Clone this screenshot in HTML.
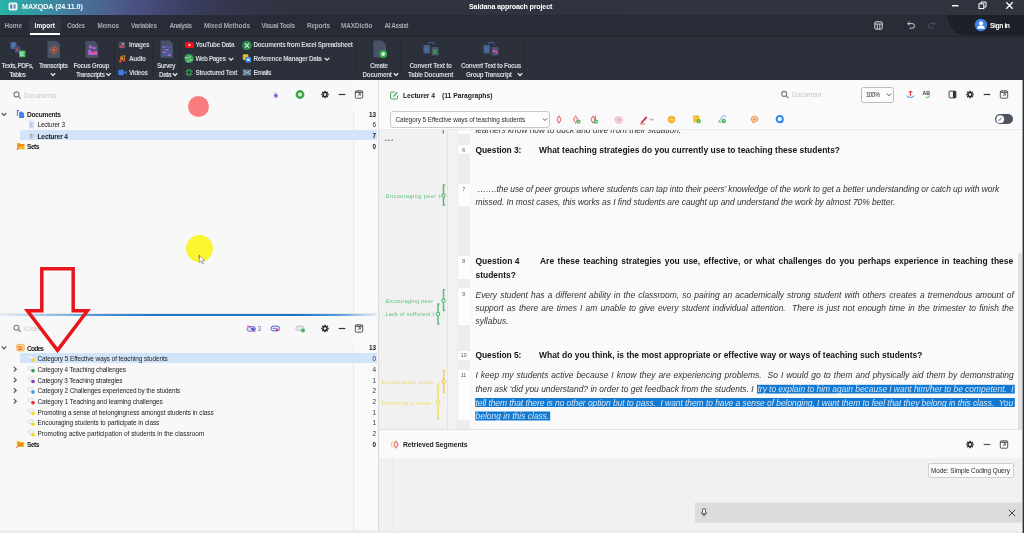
<!DOCTYPE html>
<html lang="en"><head><meta charset="utf-8"><title>MAXQDA</title>
<style>
html,body{margin:0;padding:0}
body{will-change:transform;width:1024px;height:533px;overflow:hidden;position:relative;background:#f8f8f8;font-family:"Liberation Sans",sans-serif;-webkit-font-smoothing:antialiased}
.b{position:absolute;display:block}
.t{position:absolute;white-space:nowrap;display:block}
</style></head>
<body>
<div class="b" style="left:0px;top:80px;width:1024px;height:453px;background:#f9f9f9;"></div>
<div class="b" style="left:0px;top:80px;width:353px;height:450px;background:#f8f8f8;"></div>
<div class="b" style="left:353px;top:111px;width:1px;height:202px;background:#e9e9e9;"></div>
<div class="b" style="left:353px;top:345px;width:1px;height:185px;background:#e9e9e9;"></div>
<svg class="b" style="left:378px;top:80px" width="3" height="454"><rect x="0.20" y="0.00" width="1.30" height="453.00" fill="#d8d8d8"/></svg>
<svg class="b" style="left:13px;top:91px;" width="10" height="10"><g transform="translate(0.30 0.20)"><circle cx="3.2" cy="3.2" r="2.5" fill="none" stroke="#7c7c7c" stroke-width="1.1"/><path d="M5 5L7.4 7.4" stroke="#7c7c7c" stroke-width="1.2"/></g></svg>
<span class="t" style="left:24.00px;top:91.64px;font-size:6.4px;line-height:8px;color:#c9c9c9;letter-spacing:0.016px;">Documents</span>
<svg class="b" style="left:272px;top:91px;" width="9" height="9"><g transform="translate(0.30 0.00)"><path d="M0.8 0.6h3l1.8 1.8v4.8h-4.8z" fill="#dfe3f0"/><circle cx="3.6" cy="4.4" r="1.7" fill="#7a50e2"/><circle cx="3.9" cy="5.6" r="1.1" fill="#c44ac0"/></g></svg>
<svg class="b" style="left:295px;top:89px;" width="11" height="12"><g transform="translate(0.00 0.50)"><circle cx="5" cy="5" r="4.4" fill="#3aa64c"/><circle cx="5" cy="5" r="2.1" fill="#c6efca"/><circle cx="5" cy="5" r="0.9" fill="#f2f6a0"/></g></svg>
<svg class="b" style="left:320px;top:89px;" width="11" height="12"><g transform="translate(0.00 0.50)"><circle cx="5" cy="5" r="2.0" fill="none" stroke="#222" stroke-width="1.4"/><path d="M7.50 5.00L8.75 5.00" stroke="#222" stroke-width="1.4"/><path d="M6.77 6.77L7.65 7.65" stroke="#222" stroke-width="1.4"/><path d="M5.00 7.50L5.00 8.75" stroke="#222" stroke-width="1.4"/><path d="M3.23 6.77L2.35 7.65" stroke="#222" stroke-width="1.4"/><path d="M2.50 5.00L1.25 5.00" stroke="#222" stroke-width="1.4"/><path d="M3.23 3.23L2.35 2.35" stroke="#222" stroke-width="1.4"/><path d="M5.00 2.50L5.00 1.25" stroke="#222" stroke-width="1.4"/><path d="M6.77 3.23L7.65 2.35" stroke="#222" stroke-width="1.4"/></g></svg>
<svg class="b" style="left:338px;top:93px" width="9" height="4"><rect x="0.70" y="0.90" width="6.60" height="1.20" fill="#333"/></svg>
<svg class="b" style="left:354px;top:90px;" width="11" height="10"><g transform="translate(0.50 0.00)"><rect x="0.8" y="0.8" width="7.4" height="7.4" rx="1" fill="none" stroke="#444" stroke-width="0.9"/><path d="M0.8 2.2h7.4" stroke="#444" stroke-width="1.2"/><path d="M3.4 6.2L5.8 3.8M4 3.7h1.9v1.9" fill="none" stroke="#444" stroke-width="0.8"/></g></svg>
<svg class="b" style="left:1px;top:112px;" width="7" height="6"><g transform="translate(0.00 0.20)"><path d="M0.7 0.8L3 3.2L5.3 0.8" fill="none" stroke="#555" stroke-width="1.2"/></g></svg>
<svg class="b" style="left:16px;top:109px;" width="10" height="11"><g transform="translate(0.50 0.50)"><path d="M0.4 0.6h2.2v1H1.4v5H0.4z" fill="#3f6fc8"/><path d="M2.6 2.2h3.2l1.8 1.8v4.6H2.6z" fill="#3f82ee"/></g></svg>
<span class="t" style="left:27.00px;top:110.14px;font-size:6.6px;line-height:9px;color:#1c1c1c;font-weight:bold;letter-spacing:-0.242px;">Documents</span>
<span class="t" style="right:648.00px;top:110.64px;font-size:6.4px;line-height:8px;color:#1c1c1c;font-weight:bold;">13</span>
<svg class="b" style="left:29px;top:120px;" width="6" height="10"><g transform="translate(0.00 0.50)"><path d="M0.4 0.4h3l1.2 1.2v6H0.4z" fill="#e6eef8" stroke="#b4c6dc" stroke-width="0.5"/><path d="M1.2 3h2.4M1.2 4.4h2.4M1.2 5.8h2.4" stroke="#6c9ad8" stroke-width="0.6"/></g></svg>
<span class="t" style="left:37.50px;top:121.24px;font-size:6.4px;line-height:8px;color:#1c1c1c;letter-spacing:-0.146px;">Lecturer 3</span>
<span class="t" style="right:648.00px;top:121.24px;font-size:6.4px;line-height:8px;color:#333;">6</span>
<div class="b" style="left:20px;top:130px;width:357px;height:10px;background:#d2e4f9;border-radius:1.5px 0 0 1.5px;"></div>
<svg class="b" style="left:29px;top:131px;" width="6" height="10"><g transform="translate(0.00 0.50)"><path d="M0.4 0.4h3l1.2 1.2v6H0.4z" fill="#e6eef8" stroke="#b4c6dc" stroke-width="0.5"/><path d="M1.2 3h2.4M1.2 4.4h2.4M1.2 5.8h2.4" stroke="#555" stroke-width="0.6"/></g></svg>
<span class="t" style="left:37.50px;top:131.74px;font-size:6.6px;line-height:9px;color:#1c1c1c;font-weight:bold;letter-spacing:-0.157px;">Lecturer 4</span>
<span class="t" style="right:648.00px;top:132.24px;font-size:6.4px;line-height:8px;color:#1c1c1c;font-weight:bold;">7</span>
<svg class="b" style="left:16px;top:141px;" width="10" height="11"><g transform="translate(0.50 0.50)"><path d="M0.5 1.4h3l0.8 1h3.8v5.4H0.5z" fill="#f2b21c"/><path d="M1 3.6h6.6" stroke="#e0452a" stroke-width="0.7"/><path d="M0.3 8.6l1.6-1.8" stroke="#e0303a" stroke-width="0.9"/></g></svg>
<span class="t" style="left:27.00px;top:142.14px;font-size:6.6px;line-height:9px;color:#1c1c1c;font-weight:bold;letter-spacing:-0.480px;">Sets</span>
<span class="t" style="right:648.00px;top:142.64px;font-size:6.4px;line-height:8px;color:#1c1c1c;font-weight:bold;">0</span>
<div class="b" style="left:187.5px;top:96.3px;width:21px;height:21px;border-radius:50%;background:#f87d7f;"></div>
<div class="b" style="left:186px;top:234.5px;width:27px;height:27px;border-radius:50%;background:#fbf531;"></div>
<svg class="b" style="left:198px;top:254px;" width="9" height="13"><g transform="translate(0.30 0.20)"><path d="M1 0.8V8.4L2.8 6.8L4 9.8L5.2 9.3L4 6.4H6.3z" fill="#fdfdfd" stroke="#777" stroke-width="0.6" stroke-linejoin="round"/><path d="M1 0.8v3.6" stroke="#b04030" stroke-width="0.7"/></g></svg>
<div class="b" style="left:0px;top:313px;width:377px;height:1px;background:#e4e4e4;"></div>
<div class="b" style="left:0px;top:314px;width:377px;height:2px;background:linear-gradient(90deg,#e8edf4 0px,#c4d9f0 25px,#8dbae6 60px,#4a93d8 100px,#2079cd 150px,#1a74ca 300px,#5a9edc 340px,#bcd6ef 365px,#e8edf4 377px);"></div>
<svg class="b" style="left:13px;top:324px;" width="10" height="10"><g transform="translate(0.30 0.50)"><circle cx="3.2" cy="3.2" r="2.5" fill="none" stroke="#7c7c7c" stroke-width="1.1"/><path d="M5 5L7.4 7.4" stroke="#7c7c7c" stroke-width="1.2"/></g></svg>
<span class="t" style="left:24.00px;top:324.94px;font-size:6.4px;line-height:8px;color:#c9c9c9;letter-spacing:-0.375px;">Codes</span>
<svg class="b" style="left:246px;top:324px;" width="12" height="10"><g transform="translate(0.00 0.00)"><rect x="1" y="2.6" width="8.6" height="4.6" rx="2.3" fill="#dfe4f6" stroke="#5a4fd0" stroke-width="0.8"/><path d="M1.4 1.2l8 6.6" stroke="#e03a6a" stroke-width="0.9"/><circle cx="7" cy="5" r="1.6" fill="#3a56e0"/></g></svg>
<span class="t" style="left:257.50px;top:325.14px;font-size:6.4px;line-height:8px;color:#5a62c8;">3</span>
<svg class="b" style="left:270px;top:324px;" width="12" height="10"><g transform="translate(0.00 0.00)"><rect x="1" y="2.2" width="8.6" height="4.6" rx="2.3" fill="#eef0fb" stroke="#3f4fd8" stroke-width="0.9"/><path d="M5.4 4.4l2.8 0l-1.4 3.6z" fill="#d0346a"/><path d="M2.6 4.4h3" stroke="#3f4fd8" stroke-width="0.8"/></g></svg>
<svg class="b" style="left:295px;top:324px;" width="12" height="10"><g transform="translate(0.00 0.00)"><rect x="0.8" y="2" width="8.2" height="4.4" rx="2.2" fill="#e4e8ec" stroke="#b4bcc6" stroke-width="0.8"/><circle cx="8" cy="6.4" r="2" fill="#42b45a"/></g></svg>
<svg class="b" style="left:320px;top:323px;" width="11" height="12"><g transform="translate(0.00 0.50)"><circle cx="5" cy="5" r="2.0" fill="none" stroke="#222" stroke-width="1.4"/><path d="M7.50 5.00L8.75 5.00" stroke="#222" stroke-width="1.4"/><path d="M6.77 6.77L7.65 7.65" stroke="#222" stroke-width="1.4"/><path d="M5.00 7.50L5.00 8.75" stroke="#222" stroke-width="1.4"/><path d="M3.23 6.77L2.35 7.65" stroke="#222" stroke-width="1.4"/><path d="M2.50 5.00L1.25 5.00" stroke="#222" stroke-width="1.4"/><path d="M3.23 3.23L2.35 2.35" stroke="#222" stroke-width="1.4"/><path d="M5.00 2.50L5.00 1.25" stroke="#222" stroke-width="1.4"/><path d="M6.77 3.23L7.65 2.35" stroke="#222" stroke-width="1.4"/></g></svg>
<svg class="b" style="left:338px;top:327px" width="9" height="4"><rect x="0.70" y="0.90" width="6.60" height="1.20" fill="#333"/></svg>
<svg class="b" style="left:354px;top:324px;" width="11" height="10"><g transform="translate(0.50 0.00)"><rect x="0.8" y="0.8" width="7.4" height="7.4" rx="1" fill="none" stroke="#444" stroke-width="0.9"/><path d="M0.8 2.2h7.4" stroke="#444" stroke-width="1.2"/><path d="M3.4 6.2L5.8 3.8M4 3.7h1.9v1.9" fill="none" stroke="#444" stroke-width="0.8"/></g></svg>
<svg class="b" style="left:1px;top:345px;" width="7" height="7"><g transform="translate(0.00 0.60)"><path d="M0.7 0.8L3 3.2L5.3 0.8" fill="none" stroke="#555" stroke-width="1.2"/></g></svg>
<svg class="b" style="left:16px;top:343px;" width="10" height="10"><g transform="translate(0.00 0.00)"><rect x="0.8" y="1.4" width="7.4" height="6.4" rx="1.4" fill="#fbe2a0" stroke="#f0a020" stroke-width="0.8"/><path d="M2 3.4h3.4M2 5h5M2 6.4h4" stroke="#e8502a" stroke-width="0.8"/></g></svg>
<span class="t" style="left:27.00px;top:343.84px;font-size:6.6px;line-height:9px;color:#1c1c1c;font-weight:bold;letter-spacing:-0.793px;">Codes</span>
<span class="t" style="right:648.00px;top:344.34px;font-size:6.4px;line-height:8px;color:#1c1c1c;font-weight:bold;">13</span>
<div class="b" style="left:20px;top:353.4px;width:357px;height:10px;background:#d2e4f9;border-radius:1.5px 0 0 1.5px;"></div>
<svg class="b" style="left:27px;top:354px;" width="10" height="10"><g transform="translate(0.00 0.50)"><rect x="0.6" y="1" width="6.4" height="3.8" rx="1.9" fill="#eef2f6" stroke="#c2d2e6" stroke-width="0.7"/><circle cx="6" cy="5.6" r="1.8" fill="#f2d81c"/></g></svg>
<span class="t" style="left:37.50px;top:355.14px;font-size:6.4px;line-height:8px;color:#1c1c1c;letter-spacing:-0.054px;">Category 5 Effective ways of teaching students</span>
<span class="t" style="right:648.00px;top:355.14px;font-size:6.4px;line-height:8px;color:#333;">0</span>
<svg class="b" style="left:13px;top:366px;" width="6" height="8"><g transform="translate(0.00 0.20)"><path d="M0.8 0.7L3.2 3L0.8 5.3" fill="none" stroke="#5a5a5a" stroke-width="1.2"/></g></svg>
<svg class="b" style="left:27px;top:365px;" width="10" height="10"><g transform="translate(0.00 0.20)"><rect x="0.6" y="1" width="6.4" height="3.8" rx="1.9" fill="#eef2f6" stroke="#d6dde6" stroke-width="0.7"/><circle cx="6" cy="5.6" r="1.8" fill="#2f9a4a"/></g></svg>
<span class="t" style="left:37.50px;top:365.84px;font-size:6.4px;line-height:8px;color:#1c1c1c;letter-spacing:-0.085px;">Category 4 Teaching challenges</span>
<span class="t" style="right:648.00px;top:365.84px;font-size:6.4px;line-height:8px;color:#333;">4</span>
<svg class="b" style="left:13px;top:376px;" width="6" height="8"><g transform="translate(0.00 0.90)"><path d="M0.8 0.7L3.2 3L0.8 5.3" fill="none" stroke="#5a5a5a" stroke-width="1.2"/></g></svg>
<svg class="b" style="left:27px;top:375px;" width="10" height="10"><g transform="translate(0.00 0.90)"><rect x="0.6" y="1" width="6.4" height="3.8" rx="1.9" fill="#eef2f6" stroke="#d6dde6" stroke-width="0.7"/><circle cx="6" cy="5.6" r="1.8" fill="#8a3ad0"/></g></svg>
<span class="t" style="left:37.50px;top:376.54px;font-size:6.4px;line-height:8px;color:#1c1c1c;letter-spacing:-0.107px;">Category 3 Teaching strategies</span>
<span class="t" style="right:648.00px;top:376.54px;font-size:6.4px;line-height:8px;color:#333;">1</span>
<svg class="b" style="left:13px;top:387px;" width="6" height="8"><g transform="translate(0.00 0.50)"><path d="M0.8 0.7L3.2 3L0.8 5.3" fill="none" stroke="#5a5a5a" stroke-width="1.2"/></g></svg>
<svg class="b" style="left:27px;top:386px;" width="10" height="10"><g transform="translate(0.00 0.50)"><rect x="0.6" y="1" width="6.4" height="3.8" rx="1.9" fill="#eef2f6" stroke="#d6dde6" stroke-width="0.7"/><circle cx="6" cy="5.6" r="1.8" fill="#3a9af0"/></g></svg>
<span class="t" style="left:37.50px;top:387.14px;font-size:6.4px;line-height:8px;color:#1c1c1c;letter-spacing:-0.082px;">Category 2 Challenges experienced by the students</span>
<span class="t" style="right:648.00px;top:387.14px;font-size:6.4px;line-height:8px;color:#333;">2</span>
<svg class="b" style="left:13px;top:398px;" width="6" height="8"><g transform="translate(0.00 0.20)"><path d="M0.8 0.7L3.2 3L0.8 5.3" fill="none" stroke="#5a5a5a" stroke-width="1.2"/></g></svg>
<svg class="b" style="left:27px;top:397px;" width="10" height="10"><g transform="translate(0.00 0.20)"><rect x="0.6" y="1" width="6.4" height="3.8" rx="1.9" fill="#eef2f6" stroke="#d6dde6" stroke-width="0.7"/><circle cx="6" cy="5.6" r="1.8" fill="#e0262a"/></g></svg>
<span class="t" style="left:37.50px;top:397.84px;font-size:6.4px;line-height:8px;color:#1c1c1c;letter-spacing:-0.059px;">Category 1 Teaching and learning challenges</span>
<span class="t" style="right:648.00px;top:397.84px;font-size:6.4px;line-height:8px;color:#333;">2</span>
<svg class="b" style="left:27px;top:407px;" width="10" height="10"><g transform="translate(0.00 0.90)"><rect x="0.6" y="1" width="6.4" height="3.8" rx="1.9" fill="#eef2f6" stroke="#d6dde6" stroke-width="0.7"/><circle cx="6" cy="5.6" r="1.8" fill="#f2d81c"/></g></svg>
<span class="t" style="left:37.50px;top:408.54px;font-size:6.4px;line-height:8px;color:#1c1c1c;letter-spacing:-0.042px;">Promoting a sense of belongingness amongst students in class</span>
<span class="t" style="right:648.00px;top:408.54px;font-size:6.4px;line-height:8px;color:#333;">1</span>
<svg class="b" style="left:27px;top:418px;" width="10" height="10"><g transform="translate(0.00 0.60)"><rect x="0.6" y="1" width="6.4" height="3.8" rx="1.9" fill="#eef2f6" stroke="#d6dde6" stroke-width="0.7"/><circle cx="6" cy="5.6" r="1.8" fill="#f2d81c"/></g></svg>
<span class="t" style="left:37.50px;top:419.24px;font-size:6.4px;line-height:8px;color:#1c1c1c;letter-spacing:-0.034px;">Encouraging students to participate in class</span>
<span class="t" style="right:648.00px;top:419.24px;font-size:6.4px;line-height:8px;color:#333;">1</span>
<svg class="b" style="left:27px;top:429px;" width="10" height="10"><g transform="translate(0.00 0.20)"><rect x="0.6" y="1" width="6.4" height="3.8" rx="1.9" fill="#eef2f6" stroke="#d6dde6" stroke-width="0.7"/><circle cx="6" cy="5.6" r="1.8" fill="#f2d81c"/></g></svg>
<span class="t" style="left:37.50px;top:429.84px;font-size:6.4px;line-height:8px;color:#1c1c1c;letter-spacing:0.027px;">Promoting active participation of students in the classroom</span>
<span class="t" style="right:648.00px;top:429.84px;font-size:6.4px;line-height:8px;color:#333;">2</span>
<svg class="b" style="left:16px;top:439px;" width="10" height="11"><g transform="translate(0.00 0.50)"><path d="M0.8 1.6h2.6l0.8 1h4v5H0.8z" fill="#f2c01c"/><path d="M2 4.2h5M2 5.8h5" stroke="#e0452a" stroke-width="0.7"/><path d="M0.3 8.6l1.4-1.6" stroke="#e0303a" stroke-width="0.9"/></g></svg>
<span class="t" style="left:27.00px;top:440.14px;font-size:6.6px;line-height:9px;color:#1c1c1c;font-weight:bold;letter-spacing:-0.480px;">Sets</span>
<span class="t" style="right:648.00px;top:440.64px;font-size:6.4px;line-height:8px;color:#1c1c1c;font-weight:bold;">0</span>
<svg class="b" style="left:20px;top:262px;" width="77" height="97"><g transform="translate(0.00 0.00) translate(-20.00 -262.00)"><path d="M41.8 268.8H73.2V310.7H87.4L57.5 350.3L27.4 310.7H41.8Z" fill="none" stroke="#e9151d" stroke-width="3.5" stroke-linejoin="miter" stroke-miterlimit="10"/></g></svg>
<svg class="b" style="left:0px;top:530px" width="1025" height="4"><rect x="0.00" y="0.40" width="1024.00" height="2.60" fill="#eaeaea"/></svg>
<div class="b" style="left:0px;top:0px;width:1024px;height:15px;background:linear-gradient(90deg,#2ab3a6 0px,#2fa0a3 25px,#3a8ba0 50px,#46739a 80px,#4c608e 110px,#494f80 140px,#41446d 170px,#393b5a 200px,#33354a 240px,#2f3340 290px,#2f343e 100%);"></div>
<svg class="b" style="left:8px;top:2px;" width="11" height="10"><g transform="translate(0.00 0.00)"><rect x="0.5" y="0.5" width="9" height="8" rx="1.8" fill="#e9f4f4"/><rect x="2.2" y="2.4" width="2" height="4.2" fill="#5a7fa8"/><rect x="5.4" y="2.4" width="2.4" height="4.2" fill="#7a9cc0"/></g></svg>
<span class="t" style="left:22.00px;top:1.71px;font-size:7.2px;line-height:9px;color:#fff;font-weight:bold;letter-spacing:-0.077px;">MAXQDA (24.11.0)</span>
<span class="t" style="left:469.00px;top:2.01px;font-size:7.2px;line-height:9px;color:#fff;font-weight:bold;letter-spacing:-0.197px;">Saldana approach project</span>
<svg class="b" style="left:952px;top:5px" width="8" height="3"><rect x="0.00" y="0.00" width="6.50" height="1.40" fill="#fff"/></svg>
<svg class="b" style="left:978px;top:1px;" width="10" height="10"><g transform="translate(0.00 0.00)"><rect x="1" y="2.8" width="4.8" height="4.8" fill="none" stroke="#fff" stroke-width="1"/><path d="M3 2.6V1h5v5H6.2" fill="none" stroke="#fff" stroke-width="1"/></g></svg>
<svg class="b" style="left:1005px;top:1px;" width="10" height="10"><g transform="translate(0.00 0.00)"><path d="M1.3 1.3L7.7 7.7M7.7 1.3L1.3 7.7" stroke="#fff" stroke-width="1.3"/></g></svg>
<div class="b" style="left:0px;top:15px;width:1024px;height:21px;background:#272c36;"></div>
<div class="b" style="left:0px;top:36px;width:1024px;height:1px;background:#20242c;"></div>
<div class="b" style="left:29px;top:17px;width:32px;height:17px;background:#30353f;border-radius:2px 2px 0 0;"></div>
<div class="b" style="left:30px;top:33px;width:30px;height:2px;background:#fff;"></div>
<span class="t" style="left:4.50px;top:22.14px;font-size:6.4px;line-height:8px;color:#a3a8b1;font-weight:bold;letter-spacing:-0.094px;">Home</span>
<span class="t" style="left:34.50px;top:22.14px;font-size:6.4px;line-height:8px;color:#fff;font-weight:bold;letter-spacing:0.118px;">Import</span>
<span class="t" style="left:67.00px;top:22.14px;font-size:6.4px;line-height:8px;color:#a3a8b1;font-weight:bold;letter-spacing:-0.390px;">Codes</span>
<span class="t" style="left:97.50px;top:22.14px;font-size:6.4px;line-height:8px;color:#a3a8b1;font-weight:bold;letter-spacing:-0.138px;">Memos</span>
<span class="t" style="left:131.00px;top:22.14px;font-size:6.4px;line-height:8px;color:#a3a8b1;font-weight:bold;letter-spacing:-0.264px;">Variables</span>
<span class="t" style="left:169.50px;top:22.14px;font-size:6.4px;line-height:8px;color:#a3a8b1;font-weight:bold;letter-spacing:-0.546px;">Analysis</span>
<span class="t" style="left:204.00px;top:22.14px;font-size:6.4px;line-height:8px;color:#a3a8b1;font-weight:bold;letter-spacing:-0.019px;">Mixed Methods</span>
<span class="t" style="left:261.50px;top:22.14px;font-size:6.4px;line-height:8px;color:#a3a8b1;font-weight:bold;letter-spacing:-0.328px;">Visual Tools</span>
<span class="t" style="left:307.00px;top:22.14px;font-size:6.4px;line-height:8px;color:#a3a8b1;font-weight:bold;letter-spacing:-0.197px;">Reports</span>
<span class="t" style="left:341.00px;top:22.14px;font-size:6.4px;line-height:8px;color:#a3a8b1;font-weight:bold;letter-spacing:-0.063px;">MAXDictio</span>
<span class="t" style="left:384.50px;top:22.14px;font-size:6.4px;line-height:8px;color:#a3a8b1;font-weight:bold;letter-spacing:-0.394px;">AI Assist</span>
<svg class="b" style="left:874px;top:21px;" width="10" height="10"><g transform="translate(0.00 0.00)"><rect x="0.8" y="0.8" width="7.4" height="7.4" rx="1" fill="none" stroke="#d6d9de" stroke-width="1"/><path d="M0.8 3h7.4M3.3 3v5.2M5.8 3v5.2" stroke="#d6d9de" stroke-width="0.9"/></g></svg>
<svg class="b" style="left:906px;top:21px;" width="11" height="10"><g transform="translate(0.00 0.00)"><path d="M2.2 2.6H6.2a2.3 2.3 0 0 1 0 4.6H3.6" fill="none" stroke="#cfd3d9" stroke-width="1"/><path d="M3.6 0.9L1.6 2.6L3.6 4.3" fill="none" stroke="#cfd3d9" stroke-width="1"/></g></svg>
<svg class="b" style="left:927px;top:21px;" width="11" height="10"><g transform="translate(0.00 0.00)"><path d="M7.8 2.6H3.8a2.3 2.3 0 0 0 0 4.6H6.4" fill="none" stroke="#4a505c" stroke-width="1"/><path d="M6.4 0.9L8.4 2.6L6.4 4.3" fill="none" stroke="#4a505c" stroke-width="1"/></g></svg>
<svg class="b" style="left:947px;top:15px;" width="78" height="22"><g transform="translate(0.00 0.00)"><path d="M0 0H77V20.4H19C8 20.4 1.5 12 0 0Z" fill="#1c2029"/></g></svg>
<svg class="b" style="left:974px;top:18px;" width="15" height="15"><g transform="translate(0.50 0.50)"><circle cx="6.5" cy="6.5" r="6.2" fill="#3b82e6"/><circle cx="6.5" cy="4.9" r="2.1" fill="#fff"/><path d="M2.6 10.2c0.4-2.6 2-3.2 3.9-3.2s3.5 0.6 3.9 3.2z" fill="#fff"/></g></svg>
<span class="t" style="left:990.00px;top:21.03px;font-size:6.8px;line-height:9px;color:#fff;font-weight:bold;letter-spacing:-0.444px;">Sign in</span>
<div class="b" style="left:0px;top:37px;width:1024px;height:43px;background:#2b303b;"></div>
<svg class="b" style="left:10px;top:41px;" width="17" height="18"><g transform="translate(0.00 0.00)"><rect x="0.5" y="1" width="6" height="7" rx="1" fill="#48689a"/><path d="M2 3.4h3M2 5h3" stroke="#5f8ad0" stroke-width="0.7"/><rect x="4.8" y="5" width="5.6" height="7" rx="1" fill="#4c4a74"/><path d="M6.2 7.6l1.8 2.2" stroke="#d0603a" stroke-width="1.1"/><rect x="9" y="9.4" width="6.5" height="6.8" rx="1" fill="#46b85c"/><path d="M10.6 11.2h3.2M10.6 12.8h3.2M10.6 14.4h3.2M10.9 11v3.6" stroke="#d6f2da" stroke-width="0.7"/></g></svg>
<span class="t" style="left:1.50px;top:62.14px;font-size:6.4px;line-height:8px;color:#d4d7dd;font-weight:bold;letter-spacing:-0.540px;">Texts, PDFs,</span>
<span class="t" style="left:9.50px;top:70.64px;font-size:6.4px;line-height:8px;color:#d4d7dd;font-weight:bold;letter-spacing:-0.660px;">Tables</span>
<svg class="b" style="left:47px;top:40px;" width="15" height="20"><g transform="translate(0.00 0.50)"><path d="M1.5 0.5h8l3.5 3.5v12.5a1 1 0 0 1-1 1h-10.5a1 1 0 0 1-1-1v-15a1 1 0 0 1 1-1z" fill="#4a5366"/><circle cx="7" cy="9.5" r="4.2" fill="none" stroke="#8a5a3e" stroke-width="0.8"/><circle cx="7" cy="9.5" r="2.8" fill="none" stroke="#b0643a" stroke-width="0.9"/><circle cx="7" cy="9.5" r="1.6" fill="#e8382a"/><circle cx="7" cy="9.5" r="0.7" fill="#f6d02a"/></g></svg>
<span class="t" style="left:39.00px;top:62.14px;font-size:6.4px;line-height:8px;color:#d4d7dd;font-weight:bold;letter-spacing:-0.550px;">Transcripts</span>
<svg class="b" style="left:50px;top:72px;" width="7" height="6"><g transform="translate(0.00 0.50)"><path d="M0.8 0.8L3 3L5.2 0.8" fill="none" stroke="#e4e6ea" stroke-width="1.25"/></g></svg>
<svg class="b" style="left:85px;top:40px;" width="15" height="20"><g transform="translate(0.00 0.50)"><path d="M1.5 0.5h8l3.5 3.5v12.5a1 1 0 0 1-1 1h-10.5a1 1 0 0 1-1-1v-15a1 1 0 0 1 1-1z" fill="#4a5366"/><circle cx="5.4" cy="6.4" r="1.7" fill="#c45ad2"/><circle cx="9.2" cy="7.6" r="1.7" fill="#a856d8"/><circle cx="4.4" cy="10.6" r="1.6" fill="#b85ad6"/><path d="M3 14c0-2.6 1.4-3.6 3-3.6s2.2 1 2.4 2.4c0.4-1.6 1.2-2.4 2.4-2.4s1.8 1.2 1.8 3.2l-1 1H4z" fill="#c45ad2"/><circle cx="9.6" cy="11.6" r="0.8" fill="#e8504a"/></g></svg>
<span class="t" style="left:73.50px;top:62.14px;font-size:6.4px;line-height:8px;color:#d4d7dd;font-weight:bold;letter-spacing:-0.382px;">Focus Group</span>
<span class="t" style="left:76.00px;top:70.64px;font-size:6.4px;line-height:8px;color:#d4d7dd;font-weight:bold;letter-spacing:-0.550px;">Transcripts</span>
<svg class="b" style="left:105px;top:72px;" width="8" height="6"><g transform="translate(0.50 0.50)"><path d="M0.8 0.8L3 3L5.2 0.8" fill="none" stroke="#e4e6ea" stroke-width="1.25"/></g></svg>
<div class="b" style="left:114px;top:42px;width:1px;height:34px;background:#242831;"></div>
<svg class="b" style="left:118px;top:41px;" width="9" height="9"><g transform="translate(0.50 0.50)"><rect x="0.3" y="0.3" width="6.4" height="6.4" rx="1" fill="#4a5366"/><circle cx="4.6" cy="2.4" r="1" fill="#f2a33a"/><path d="M0.6 6.2l2-2.6 1.4 1.6 1-1 1.4 2z" fill="#e0455a"/></g></svg>
<span class="t" style="left:129.00px;top:41.14px;font-size:6.4px;line-height:8px;color:#d4d7dd;font-weight:bold;letter-spacing:-0.311px;">Images</span>
<svg class="b" style="left:118px;top:55px;" width="9" height="9"><g transform="translate(0.50 0.00)"><path d="M2.3 6V1.6l3.6-1v4.4" fill="none" stroke="#f08a2a" stroke-width="1"/><circle cx="1.7" cy="6.2" r="1.3" fill="#e8452a"/><circle cx="5.3" cy="5.2" r="1.3" fill="#e8452a"/><circle cx="3.6" cy="3.4" r="1" fill="#f2c43a"/></g></svg>
<span class="t" style="left:129.00px;top:55.39px;font-size:6.4px;line-height:8px;color:#d4d7dd;font-weight:bold;letter-spacing:-0.282px;">Audio</span>
<svg class="b" style="left:118px;top:69px;" width="10" height="8"><g transform="translate(0.00 0.00)"><rect x="0.3" y="0.8" width="5.6" height="5.4" rx="1" fill="#3a7be8"/><path d="M6.2 3.5l2.4-2v4z" fill="#3a7be8"/></g></svg>
<span class="t" style="left:129.00px;top:69.14px;font-size:6.4px;line-height:8px;color:#d4d7dd;font-weight:bold;letter-spacing:-0.374px;">Videos</span>
<svg class="b" style="left:152px;top:42px" width="3" height="35"><rect x="0.50" y="0.00" width="1.00" height="34.00" fill="#242831"/></svg>
<svg class="b" style="left:160px;top:40px;" width="15" height="20"><g transform="translate(0.00 0.00)"><path d="M1.5 0.5h8l3.5 3.5v13a1 1 0 0 1-1 1h-10.5a1 1 0 0 1-1-1v-15.5a1 1 0 0 1 1-1z" fill="#4a5366"/><path d="M2.6 7.2h8.8M2.6 9.8h8.8M2.6 12.4h8.8M2.6 15h8.8" stroke="#4a66c8" stroke-width="1.3"/><path d="M2.6 7.2h2M6 9.8h2.4M2.6 12.4h3M8 15h3" stroke="#c06ad8" stroke-width="1.3"/></g></svg>
<span class="t" style="left:157.00px;top:62.14px;font-size:6.4px;line-height:8px;color:#d4d7dd;font-weight:bold;letter-spacing:-0.569px;">Survey</span>
<span class="t" style="left:159.00px;top:70.64px;font-size:6.4px;line-height:8px;color:#d4d7dd;font-weight:bold;letter-spacing:-0.457px;">Data</span>
<svg class="b" style="left:172px;top:72px;" width="7" height="6"><g transform="translate(0.00 0.50)"><path d="M0.8 0.8L3 3L5.2 0.8" fill="none" stroke="#e4e6ea" stroke-width="1.25"/></g></svg>
<svg class="b" style="left:180px;top:42px" width="3" height="35"><rect x="0.50" y="0.00" width="1.00" height="34.00" fill="#242831"/></svg>
<svg class="b" style="left:185px;top:42px;" width="10" height="7"><g transform="translate(0.00 0.00)"><rect x="0" y="0" width="9" height="6" rx="1.6" fill="#f0101c"/><path d="M3.6 1.6l2.6 1.4-2.6 1.4z" fill="#fff"/></g></svg>
<span class="t" style="left:195.50px;top:41.04px;font-size:6.4px;line-height:8px;color:#d4d7dd;font-weight:bold;letter-spacing:-0.280px;">YouTube Data</span>
<svg class="b" style="left:184px;top:53px;" width="11" height="12"><g transform="translate(0.00 0.50)"><circle cx="5" cy="5" r="4.6" fill="#3aa35a"/><path d="M1 4.2c1.6-0.6 2.2 0.6 3.4 0.4s1.2-1.8 2.6-1.6M3 8.6c0.4-1.4 1.8-1 2.6-1.8s2-0.4 3.2-0.2" stroke="#bfe8c8" stroke-width="0.9" fill="none"/></g></svg>
<span class="t" style="left:195.50px;top:55.39px;font-size:6.4px;line-height:8px;color:#d4d7dd;font-weight:bold;letter-spacing:-0.441px;">Web Pages</span>
<svg class="b" style="left:228px;top:57px;" width="7" height="6"><g transform="translate(0.00 0.20)"><path d="M0.8 0.8L3 3L5.2 0.8" fill="none" stroke="#e4e6ea" stroke-width="1.25"/></g></svg>
<svg class="b" style="left:185px;top:68px;" width="9" height="10"><g transform="translate(0.00 0.50)"><path d="M2.8 0.5v7M5.2 0.5v7M0.5 2.8h7M0.5 5.2h7" stroke="#3aa84a" stroke-width="1.1"/><rect x="2.2" y="2.2" width="3.6" height="3.6" fill="#2b303b" stroke="#3aa84a" stroke-width="0.8"/></g></svg>
<span class="t" style="left:195.50px;top:69.14px;font-size:6.4px;line-height:8px;color:#d4d7dd;font-weight:bold;letter-spacing:-0.344px;">Structured Text</span>
<svg class="b" style="left:242px;top:40px;" width="11" height="12"><g transform="translate(0.00 0.50)"><circle cx="5" cy="5" r="4.8" fill="#2a8a4a"/><path d="M3 2.8l4 4.4M7 2.8l-4 4.4" stroke="#d8f0dc" stroke-width="1.1"/></g></svg>
<span class="t" style="left:253.50px;top:41.04px;font-size:6.4px;line-height:8px;color:#d4d7dd;font-weight:bold;letter-spacing:-0.324px;">Documents from Excel Spreadsheet</span>
<svg class="b" style="left:242px;top:54px;" width="11" height="10"><g transform="translate(0.50 0.00)"><rect x="0.3" y="0.3" width="5.6" height="5.6" rx="0.8" fill="#e8b82a"/><rect x="3" y="3" width="5.6" height="5.6" rx="0.8" fill="#3a86e0"/><rect x="4.4" y="4.6" width="2.8" height="2.4" fill="#cfe2f8"/></g></svg>
<span class="t" style="left:253.50px;top:55.39px;font-size:6.4px;line-height:8px;color:#d4d7dd;font-weight:bold;letter-spacing:-0.295px;">Reference Manager Data</span>
<svg class="b" style="left:324px;top:57px;" width="7" height="6"><g transform="translate(0.00 0.20)"><path d="M0.8 0.8L3 3L5.2 0.8" fill="none" stroke="#e4e6ea" stroke-width="1.25"/></g></svg>
<svg class="b" style="left:242px;top:69px;" width="11" height="8"><g transform="translate(0.50 0.00)"><rect x="0.4" y="0.4" width="8.2" height="6.2" rx="1" fill="#5f7890"/><path d="M0.8 1l3.7 2.8L8.2 1M0.8 6l2.8-2.4M8.2 6L5.4 3.6" stroke="#c8d6e2" stroke-width="0.7" fill="none"/></g></svg>
<span class="t" style="left:253.50px;top:69.14px;font-size:6.4px;line-height:8px;color:#d4d7dd;font-weight:bold;letter-spacing:-0.527px;">Emails</span>
<svg class="b" style="left:356px;top:42px" width="3" height="35"><rect x="0.50" y="0.00" width="1.00" height="34.00" fill="#242831"/></svg>
<svg class="b" style="left:373px;top:40px;" width="17" height="20"><g transform="translate(0.00 0.00)"><path d="M1.5 0.5h7.5l4 4v12a1 1 0 0 1-1 1h-10.5a1 1 0 0 1-1-1v-15a1 1 0 0 1 1-1z" fill="#4a5366"/><circle cx="10.2" cy="14" r="4" fill="#2fa84a"/><circle cx="10.2" cy="14" r="1.9" fill="#d8f5dc"/></g></svg>
<span class="t" style="left:370.00px;top:62.14px;font-size:6.4px;line-height:8px;color:#d4d7dd;font-weight:bold;letter-spacing:-0.384px;">Create</span>
<span class="t" style="left:362.50px;top:70.64px;font-size:6.4px;line-height:8px;color:#d4d7dd;font-weight:bold;letter-spacing:-0.256px;">Document</span>
<svg class="b" style="left:393px;top:72px;" width="7" height="6"><g transform="translate(0.00 0.50)"><path d="M0.8 0.8L3 3L5.2 0.8" fill="none" stroke="#e4e6ea" stroke-width="1.25"/></g></svg>
<svg class="b" style="left:400px;top:42px" width="3" height="35"><rect x="0.50" y="0.00" width="1.00" height="34.00" fill="#242831"/></svg>
<svg class="b" style="left:423px;top:41px;" width="18" height="17"><g transform="translate(0.00 0.50)"><rect x="0.5" y="3.5" width="6.5" height="8.5" rx="1" fill="#4a5f80"/><path d="M2 6.4h3.4M2 8h3.4M2 9.6h3.4" stroke="#3a7be8" stroke-width="0.7"/><rect x="8.5" y="5.5" width="7" height="8.5" rx="1" fill="#4a5366"/><path d="M10 8l4 4.6M14 8l-4 4.6" stroke="#3aa84a" stroke-width="1.2"/><path d="M5 2.4c2-2 5-2 7 0.6" fill="none" stroke="#3a7be8" stroke-width="0.9"/></g></svg>
<span class="t" style="left:409.50px;top:62.14px;font-size:6.4px;line-height:8px;color:#d4d7dd;font-weight:bold;letter-spacing:-0.283px;">Convert Text to</span>
<span class="t" style="left:408.00px;top:70.64px;font-size:6.4px;line-height:8px;color:#d4d7dd;font-weight:bold;letter-spacing:-0.293px;">Table Document</span>
<svg class="b" style="left:483px;top:41px;" width="18" height="17"><g transform="translate(0.00 0.50)"><rect x="0.5" y="3.5" width="6.5" height="8.5" rx="1" fill="#4a5f80"/><path d="M2 6.4h3.4M2 8h3.4M2 9.6h3.4" stroke="#3a7be8" stroke-width="0.7"/><rect x="8.5" y="5.5" width="7" height="8.5" rx="1" fill="#4a5366"/><circle cx="11" cy="9.4" r="1.3" fill="#d64fb0"/><circle cx="13.4" cy="10.6" r="1.3" fill="#d64fb0"/><path d="M5 2.4c2-2 5-2 7 0.6" fill="none" stroke="#3a7be8" stroke-width="0.9"/></g></svg>
<span class="t" style="left:461.00px;top:62.14px;font-size:6.4px;line-height:8px;color:#d4d7dd;font-weight:bold;letter-spacing:-0.329px;">Convert Text to Focus</span>
<span class="t" style="left:466.00px;top:70.64px;font-size:6.4px;line-height:8px;color:#d4d7dd;font-weight:bold;letter-spacing:-0.395px;">Group Transcript</span>
<svg class="b" style="left:517px;top:72px;" width="7" height="6"><g transform="translate(0.00 0.50)"><path d="M0.8 0.8L3 3L5.2 0.8" fill="none" stroke="#e4e6ea" stroke-width="1.25"/></g></svg>
<div class="b" style="left:524px;top:42px;width:1px;height:34px;background:#242831;"></div>
<div class="b" style="left:379px;top:80px;width:643px;height:50px;background:#fafafa;"></div>
<svg class="b" style="left:390px;top:91px;" width="10" height="10"><g transform="translate(0.00 0.00)"><path d="M5 1H1.6a1 1 0 0 0-1 1v5a1 1 0 0 0 1 1h5a1 1 0 0 0 1-1V4.6" fill="none" stroke="#2f9a4a" stroke-width="0.9"/><path d="M3.4 5.6L7.4 1.2" stroke="#2f9a4a" stroke-width="1.2"/></g></svg>
<span class="t" style="left:403.00px;top:90.73px;font-size:6.8px;line-height:9px;color:#1c1c1c;font-weight:bold;letter-spacing:-0.098px;">Lecturer 4</span>
<span class="t" style="left:442.00px;top:90.73px;font-size:6.8px;line-height:9px;color:#1c1c1c;font-weight:bold;letter-spacing:-0.037px;">(11 Paragraphs)</span>
<svg class="b" style="left:781px;top:90px;" width="9" height="10"><g transform="translate(0.00 0.70)"><circle cx="3.2" cy="3.2" r="2.5" fill="none" stroke="#7c7c7c" stroke-width="1.1"/><path d="M5 5L7.4 7.4" stroke="#7c7c7c" stroke-width="1.2"/></g></svg>
<span class="t" style="left:792.00px;top:91.44px;font-size:6.4px;line-height:8px;color:#c4c4c4;letter-spacing:0.047px;">Document</span>
<div class="b" style="left:861px;top:86.5px;width:33px;height:16px;background:#fcfcfc;border:0.8px solid #bdbdbd;border-radius:2.5px;box-sizing:border-box;"></div>
<span class="t" style="left:866.00px;top:91.44px;font-size:6.4px;line-height:8px;color:#333;letter-spacing:-0.790px;">100%</span>
<svg class="b" style="left:886px;top:92px;" width="7" height="7"><g transform="translate(0.00 0.80)"><path d="M0.8 0.8L3 3L5.2 0.8" fill="none" stroke="#444" stroke-width="0.9"/></g></svg>
<svg class="b" style="left:906px;top:90px;" width="10" height="10"><g transform="translate(0.00 0.00)"><path d="M4.5 1v4.6" stroke="#d8282a" stroke-width="1.1"/><path d="M2.8 2.6L4.5 0.9L6.2 2.6" fill="none" stroke="#d8282a" stroke-width="1"/><path d="M0.8 5.6c0.6 2.4 6.8 2.4 7.4 0" fill="none" stroke="#3a7be8" stroke-width="1"/></g></svg>
<span class="t" style="left:922.60px;top:89.59px;font-size:5.2px;line-height:7px;color:#333;font-weight:bold;">AB</span>
<svg class="b" style="left:925px;top:94px;" width="7" height="6"><g transform="translate(0.50 0.80)"><path d="M0.6 1.8l1.4 1.4L4.4 0.6" fill="none" stroke="#2fa84a" stroke-width="1"/></g></svg>
<svg class="b" style="left:948px;top:90px;" width="10" height="10"><g transform="translate(0.50 0.50)"><rect x="0.6" y="0.6" width="6.8" height="6.8" rx="0.8" fill="none" stroke="#333" stroke-width="0.9"/><rect x="4.4" y="0.6" width="3" height="6.8" fill="#333"/></g></svg>
<svg class="b" style="left:965px;top:89px;" width="11" height="12"><g transform="translate(0.00 0.50)"><circle cx="5" cy="5" r="2.0" fill="none" stroke="#222" stroke-width="1.4"/><path d="M7.50 5.00L8.75 5.00" stroke="#222" stroke-width="1.4"/><path d="M6.77 6.77L7.65 7.65" stroke="#222" stroke-width="1.4"/><path d="M5.00 7.50L5.00 8.75" stroke="#222" stroke-width="1.4"/><path d="M3.23 6.77L2.35 7.65" stroke="#222" stroke-width="1.4"/><path d="M2.50 5.00L1.25 5.00" stroke="#222" stroke-width="1.4"/><path d="M3.23 3.23L2.35 2.35" stroke="#222" stroke-width="1.4"/><path d="M5.00 2.50L5.00 1.25" stroke="#222" stroke-width="1.4"/><path d="M6.77 3.23L7.65 2.35" stroke="#222" stroke-width="1.4"/></g></svg>
<svg class="b" style="left:983px;top:93px" width="9" height="4"><rect x="0.70" y="0.90" width="6.60" height="1.20" fill="#333"/></svg>
<svg class="b" style="left:999px;top:90px;" width="11" height="10"><g transform="translate(0.50 0.00)"><rect x="0.8" y="0.8" width="7.4" height="7.4" rx="1" fill="none" stroke="#444" stroke-width="0.9"/><path d="M0.8 2.2h7.4" stroke="#444" stroke-width="1.2"/><path d="M3.4 6.2L5.8 3.8M4 3.7h1.9v1.9" fill="none" stroke="#444" stroke-width="0.8"/></g></svg>
<div class="b" style="left:390px;top:111px;width:160px;height:17px;background:#fdfdfd;border:0.8px solid #c8c8c8;border-radius:3px;box-sizing:border-box;"></div>
<span class="t" style="left:395.50px;top:116.24px;font-size:6.4px;line-height:8px;color:#2a2a2a;letter-spacing:-0.070px;">Category 5 Effective ways of teaching students</span>
<svg class="b" style="left:542px;top:117px;" width="7" height="6"><g transform="translate(0.00 0.50)"><path d="M0.8 0.8L3 3L5.2 0.8" fill="none" stroke="#444" stroke-width="0.9"/></g></svg>
<svg class="b" style="left:556px;top:115px;" width="9" height="10"><g transform="translate(0.00 0.30)"><path d="M3 0.2v8" stroke="#8a4ad0" stroke-width="0.7"/><path d="M3 1C5.3 2.6 5.3 5.8 3 7.4C0.7 5.8 0.7 2.6 3 1Z" fill="#fdeef0" stroke="#e0343a" stroke-width="0.9"/></g></svg>
<svg class="b" style="left:572px;top:115px;" width="10" height="10"><g transform="translate(0.60 0.30)"><path d="M3 0.2v8" stroke="#8a4ad0" stroke-width="0.7"/><path d="M3 1C5.3 2.6 5.3 5.8 3 7.4C0.7 5.8 0.7 2.6 3 1Z" fill="#fdeef0" stroke="#e0343a" stroke-width="0.9"/><rect x="4" y="4.4" width="3.8" height="3.8" rx="0.9" fill="#4cc066"/><circle cx="5.9" cy="6.3" r="0.7" fill="#d6f5dc"/></g></svg>
<svg class="b" style="left:590px;top:115px;" width="9" height="10"><g transform="translate(0.00 0.30)"><path d="M3 0.2v8" stroke="#8a4ad0" stroke-width="0.7"/><path d="M3 1C5.3 2.6 5.3 5.8 3 7.4C0.7 5.8 0.7 2.6 3 1Z" fill="#fdeef0" stroke="#e0343a" stroke-width="0.9"/><path d="M5.4 0.6v5" stroke="#e0343a" stroke-width="0.8"/><rect x="4" y="4.4" width="3.8" height="3.8" rx="0.9" fill="#4cc066"/><circle cx="5.9" cy="6.3" r="0.7" fill="#d6f5dc"/></g></svg>
<svg class="b" style="left:614px;top:115px;" width="11" height="11"><g transform="translate(0.30 0.60)"><path d="M1 2.6c1.6-2 5-2 6.4 0c1.4 1.6 0.4 4.2-1.8 5c-2.6 0.8-5.8-1.8-4.6-5z" fill="#f8d2da" stroke="#ee8aa0" stroke-width="0.6"/><circle cx="4.6" cy="4.2" r="1.1" fill="#c88ae6"/></g></svg>
<svg class="b" style="left:639px;top:115px;" width="11" height="11"><g transform="translate(0.50 0.00)"><path d="M2 6.6L6.6 1.2L8 2.4L3.4 7.6z" fill="#d8344a"/><path d="M4.6 3.6l1.4 1.2" stroke="#6a3ac8" stroke-width="0.9"/><path d="M2 6.6L1.2 8.4L3.4 7.6z" fill="#222"/><path d="M0.6 9h5" stroke="#d8344a" stroke-width="0.8"/></g></svg>
<svg class="b" style="left:649px;top:118px;" width="6" height="5"><g transform="translate(0.40 0.00)"><path d="M0.5 0.6L2.2 2.4L3.9 0.6" fill="none" stroke="#555" stroke-width="0.7"/></g></svg>
<svg class="b" style="left:667px;top:115px;" width="10" height="10"><g transform="translate(0.50 0.50)"><circle cx="4" cy="4" r="3.4" fill="#fbd84a" stroke="#f0a01c" stroke-width="0.9"/><path d="M1.4 3.2c1.6-1 3.6-1 5.2 0M2.6 5.4h2.8" stroke="#e8822a" stroke-width="0.8" fill="none"/></g></svg>
<svg class="b" style="left:692px;top:115px;" width="11" height="10"><g transform="translate(0.50 0.00)"><rect x="0.6" y="0.8" width="6.4" height="6.8" rx="0.8" fill="#f6c62a"/><path d="M1.6 0.4v1.4M3.8 0.4v1.4M6 0.4v1.4" stroke="#e88a1c" stroke-width="0.7"/><circle cx="6.2" cy="6.2" r="2.1" fill="#3fb45a"/><circle cx="6.2" cy="6.2" r="0.8" fill="#c6efca"/></g></svg>
<svg class="b" style="left:717px;top:115px;" width="12" height="10"><g transform="translate(0.50 0.00)"><path d="M1 7L5.2 1.2c0.6-0.8 2-0.8 2.6 0l0.6 1.2" fill="none" stroke="#5a8ad8" stroke-width="0.8"/><path d="M1 7h3" stroke="#5a8ad8" stroke-width="0.8"/><circle cx="6.2" cy="6" r="2.2" fill="#3fb45a"/><circle cx="6.2" cy="6" r="0.8" fill="#c6efca"/></g></svg>
<svg class="b" style="left:750px;top:115px;" width="10" height="10"><g transform="translate(0.50 0.50)"><path d="M4 0.8c2 0 3.4 1.2 3.4 2.8s-1.4 2.8-3.4 2.8l-1.6 1.2l0.2-1.6C1.4 5.6 0.6 4.8 0.6 3.6C0.6 2 2 0.8 4 0.8z" fill="#fbd0a0" stroke="#f07a2a" stroke-width="0.8"/><path d="M2.4 3.6h3.2" stroke="#e8508a" stroke-width="0.7"/></g></svg>
<svg class="b" style="left:775px;top:115px;" width="10" height="10"><g transform="translate(0.50 0.00)"><circle cx="4.2" cy="4.2" r="3.1" fill="#fff" stroke="#2f8af0" stroke-width="2"/><path d="M5.6 6.6l1.6 1" stroke="#7a5ae0" stroke-width="1"/></g></svg>
<div class="b" style="left:995px;top:114px;width:18px;height:10.4px;background:#4b5361;border-radius:5.2px;"></div>
<svg class="b" style="left:996px;top:115px;" width="10" height="10"><g transform="translate(0.00 0.00)"><circle cx="4.2" cy="4.2" r="3.9" fill="#fff"/><path d="M2.6 5.8L5.8 2.6" stroke="#4b5361" stroke-width="1"/></g></svg>
<svg class="b" style="left:379px;top:129px" width="644" height="3"><rect x="0.00" y="0.50" width="643.00" height="0.80" fill="#dedede"/></svg>
<svg class="b" style="left:379px;top:130px" width="69" height="301"><rect x="0.50" y="0.30" width="67.50" height="299.00" fill="#f1f1f1"/></svg>
<svg class="b" style="left:447px;top:130px" width="2" height="301"><rect x="0.00" y="0.30" width="1.00" height="299.00" fill="#e4e4e4"/></svg>
<svg class="b" style="left:448px;top:130px" width="10" height="301"><rect x="0.00" y="0.30" width="9.00" height="299.00" fill="#f2f2f2"/></svg>
<svg class="b" style="left:457px;top:130px" width="14" height="301"><rect x="0.00" y="0.30" width="13.00" height="299.00" fill="#ededed"/></svg>
<svg class="b" style="left:470px;top:130px" width="553" height="301"><rect x="0.00" y="0.30" width="552.00" height="299.00" fill="#fafafa"/></svg>
<div class="b" style="left:457.5px;top:130.3px;width:12.5px;height:4.199999999999989px;background:#fdfdfd;border-radius:1px;"></div>
<div class="b" style="left:457.5px;top:145px;width:12.5px;height:8.800000000000011px;background:#fdfdfd;border-radius:1px;"></div>
<div class="b" style="left:457.5px;top:184px;width:12.5px;height:22px;background:#fdfdfd;border-radius:1px;"></div>
<div class="b" style="left:457.5px;top:255.5px;width:12.5px;height:23.0px;background:#fdfdfd;border-radius:1px;"></div>
<div class="b" style="left:457.5px;top:288px;width:12.5px;height:37px;background:#fdfdfd;border-radius:1px;"></div>
<div class="b" style="left:457.5px;top:351px;width:12.5px;height:9px;background:#fdfdfd;border-radius:1px;"></div>
<div class="b" style="left:457.5px;top:370px;width:12.5px;height:50px;background:#fdfdfd;border-radius:1px;"></div>
<span class="t" style="left:462.20px;top:147.19px;font-size:5.3px;line-height:7px;color:#4f5b6b;">6</span>
<span class="t" style="left:462.20px;top:185.69px;font-size:5.3px;line-height:7px;color:#4f5b6b;">7</span>
<span class="t" style="left:462.20px;top:258.19px;font-size:5.3px;line-height:7px;color:#4f5b6b;">8</span>
<span class="t" style="left:462.20px;top:291.19px;font-size:5.3px;line-height:7px;color:#4f5b6b;">9</span>
<span class="t" style="left:460.80px;top:352.19px;font-size:5.3px;line-height:7px;color:#4f5b6b;">10</span>
<span class="t" style="left:460.80px;top:372.19px;font-size:5.3px;line-height:7px;color:#4f5b6b;">11</span>
<div class="b" style="left:1018px;top:252.5px;width:3.6px;height:177px;background:#e0e0e0;border-radius:1.8px 1.8px 0 0;"></div>
<div class="b" style="left:470px;top:130.3px;width:540px;height:12px;overflow:hidden;">
<span class="t" style="left:5.50px;top:-4.84px;font-size:8.45px;line-height:11px;color:#333333;font-style:italic;letter-spacing:-0.046px;">learners know how to duck and dive from their situation.</span>
</div>
<span class="t" style="left:475.50px;top:145.06px;font-size:8.45px;line-height:11px;color:#141414;font-weight:bold;letter-spacing:-0.048px;">Question 3:</span>
<span class="t" style="left:539.00px;top:145.06px;font-size:8.45px;line-height:11px;color:#141414;font-weight:bold;letter-spacing:0.020px;">What teaching strategies do you currently use to teaching these students?</span>
<span class="t" style="left:477.50px;top:184.06px;font-size:8.45px;line-height:11px;color:#333333;font-style:italic;letter-spacing:-0.066px;">…….the use of peer groups where students can tap into their peers’ knowledge of the work to get a better understanding or catch up with work</span>
<span class="t" style="left:475.50px;top:197.26px;font-size:8.45px;line-height:11px;color:#333333;font-style:italic;letter-spacing:-0.043px;">missed. In most cases, this works as I find students are caught up and understand the work by almost 70% better.</span>
<span class="t" style="left:475.50px;top:256.06px;font-size:8.45px;line-height:11px;color:#141414;font-weight:bold;letter-spacing:0.037px;">Question 4</span>
<span class="t" style="left:540.00px;top:256.06px;font-size:8.45px;line-height:11px;color:#141414;font-weight:bold;word-spacing:1.173px;">Are these teaching strategies you use, effective, or what challenges do you perhaps experience in teaching these</span>
<span class="t" style="left:475.50px;top:269.66px;font-size:8.45px;line-height:11px;color:#141414;font-weight:bold;letter-spacing:0.016px;">students?</span>
<span class="t" style="left:475.50px;top:289.56px;font-size:8.45px;line-height:11px;color:#333333;font-style:italic;word-spacing:0.773px;">Every student has a different ability in the classroom, so pairing an academically strong student with others creates a tremendous amount of</span>
<span class="t" style="left:475.50px;top:302.96px;font-size:8.45px;line-height:11px;color:#333333;font-style:italic;word-spacing:0.841px;white-space:pre;">support as there are times I am unable to give every student individual attention.  There is just not enough time in the trimester to finish the</span>
<span class="t" style="left:475.50px;top:316.36px;font-size:8.45px;line-height:11px;color:#333333;font-style:italic;letter-spacing:0.016px;">syllabus.</span>
<span class="t" style="left:475.50px;top:350.36px;font-size:8.45px;line-height:11px;color:#141414;font-weight:bold;letter-spacing:-0.048px;">Question 5:</span>
<span class="t" style="left:539.00px;top:350.36px;font-size:8.45px;line-height:11px;color:#141414;font-weight:bold;letter-spacing:0.009px;">What do you think, is the most appropriate or effective way or ways of teaching such students?</span>
<span class="t" style="left:475.50px;top:370.26px;font-size:8.45px;line-height:11px;color:#333333;font-style:italic;word-spacing:0.676px;white-space:pre;">I keep my students active because I know they are experiencing problems.  So I would go to them and physically aid them by demonstrating</span>
<span class="t" style="left:475.50px;top:384.06px;font-size:8.45px;line-height:11px;color:#333333;font-style:italic;letter-spacing:-0.001px;">then ask ‘did you understand? in order to get feedback from the students. I</span>
<svg class="b" style="left:757px;top:384px" width="259" height="11"><rect x="0.00" y="0.80" width="257.80" height="8.70" fill="#1279d3"/></svg>
<span class="t" style="left:757.50px;top:384.06px;font-size:8.45px;line-height:11px;color:#d6e7f9;font-style:italic;word-spacing:-0.131px;white-space:pre;">try to explain to him again because I want him/her to be competent.  I</span>
<svg class="b" style="left:475px;top:398px" width="541" height="10"><rect x="0.20" y="0.00" width="539.60" height="9.00" fill="#1279d3"/></svg>
<span class="t" style="left:475.50px;top:397.56px;font-size:8.45px;line-height:11px;color:#d6e7f9;font-style:italic;letter-spacing:-0.048px;white-space:pre;">tell them that there is no other option but to pass.  I want them to have a sense of belonging, I want them to feel that they belong in this class.  You</span>
<svg class="b" style="left:475px;top:411px" width="77" height="11"><rect x="0.20" y="0.50" width="75.00" height="9.00" fill="#1279d3"/></svg>
<span class="t" style="left:475.50px;top:410.96px;font-size:8.45px;line-height:11px;color:#d6e7f9;font-style:italic;letter-spacing:0.013px;">belong in this class.</span>
<span class="t" style="left:385.00px;top:137.30px;font-size:5px;line-height:6px;color:#555;letter-spacing:1.374px;">•••</span>
<svg class="b" style="left:442px;top:130px" width="3" height="5"><rect x="0.60" y="0.30" width="1.20" height="3.00" fill="#3a6fd8"/></svg>
<svg class="b" style="left:440px;top:184px;" width="9" height="23"><g transform="translate(0.50 0.50)"><path d="M4.6 0.4H3V20.60H4.6" fill="none" stroke="#58bd78" stroke-width="1.5"/><circle cx="3" cy="11.00" r="1.7" fill="#f4f4f0" stroke="#58bd78" stroke-width="1.15"/></g></svg>
<div class="b" style="left:382px;top:190px;width:58.6px;height:12px;overflow:hidden;">
<span class="t" style="left:0.00px;top:3.19px;font-size:5.3px;line-height:7px;color:#58bd78;letter-spacing:0.546px;">..Encouraging peer to</span>
</div>
<svg class="b" style="left:440px;top:289px;" width="9" height="23"><g transform="translate(0.50 0.00)"><path d="M4.6 0.4H3V21.60H4.6" fill="none" stroke="#58bd78" stroke-width="1.5"/><circle cx="3" cy="11.50" r="1.7" fill="#f4f4f0" stroke="#58bd78" stroke-width="1.15"/></g></svg>
<span class="t" style="left:382.00px;top:298.19px;font-size:5.3px;line-height:7px;color:#58bd78;letter-spacing:0.366px;">..Encouraging peer</span>
<svg class="b" style="left:435px;top:303px;" width="8" height="23"><g transform="translate(0.00 0.50)"><path d="M4.6 0.4H3V20.60H4.6" fill="none" stroke="#58bd78" stroke-width="1.5"/><circle cx="3" cy="10.50" r="1.7" fill="#f4f4f0" stroke="#58bd78" stroke-width="1.15"/></g></svg>
<span class="t" style="left:382.00px;top:311.19px;font-size:5.3px;line-height:7px;color:#58bd78;letter-spacing:0.320px;">..Lack of sufficient t</span>
<svg class="b" style="left:440px;top:370px;" width="9" height="24"><g transform="translate(0.70 0.00)"><path d="M4.6 0.4H3V22.40H4.6" fill="none" stroke="#f3cb55" stroke-width="1.5"/><circle cx="3" cy="11.60" r="1.7" fill="#f4f4f0" stroke="#f3cb55" stroke-width="1.15"/></g></svg>
<span class="t" style="left:381.50px;top:379.19px;font-size:5.3px;line-height:7px;color:#f4d27e;letter-spacing:0.456px;">Encouraging stude</span>
<svg class="b" style="left:435px;top:383px;" width="8" height="38"><g transform="translate(0.00 0.50)"><path d="M4.6 0.4H3V35.60H4.6" fill="none" stroke="#efe15c" stroke-width="1.5"/><circle cx="3" cy="18.50" r="1.7" fill="#f4f4f0" stroke="#efe15c" stroke-width="1.15"/></g></svg>
<span class="t" style="left:381.50px;top:399.59px;font-size:5.3px;line-height:7px;color:#ece366;letter-spacing:0.332px;">Promoting a sense</span>
<svg class="b" style="left:379px;top:429px" width="644" height="3"><rect x="0.00" y="0.30" width="643.00" height="0.90" fill="#d9d9d9"/></svg>
<svg class="b" style="left:379px;top:430px" width="644" height="30"><rect x="0.50" y="0.20" width="642.50" height="28.00" fill="#fafafa"/></svg>
<svg class="b" style="left:390px;top:440px;" width="11" height="10"><g transform="translate(0.50 0.30)"><path d="M2.4 1.2C0.6 2.6 0.6 5.8 2.4 7.2" fill="none" stroke="#f0a62a" stroke-width="0.9"/><path d="M5.6 0.2v8" stroke="#8a4ad0" stroke-width="0.6"/><path d="M5.6 1C7.9 2.6 7.9 5.8 5.6 7.4C3.3 5.8 3.3 2.6 5.6 1Z" fill="#fdeef0" stroke="#e0343a" stroke-width="0.9"/></g></svg>
<span class="t" style="left:403.00px;top:439.93px;font-size:6.8px;line-height:9px;color:#1c1c1c;font-weight:bold;letter-spacing:-0.052px;">Retrieved Segments</span>
<svg class="b" style="left:965px;top:439px;" width="11" height="12"><g transform="translate(0.00 0.50)"><circle cx="5" cy="5" r="2.0" fill="none" stroke="#222" stroke-width="1.4"/><path d="M7.50 5.00L8.75 5.00" stroke="#222" stroke-width="1.4"/><path d="M6.77 6.77L7.65 7.65" stroke="#222" stroke-width="1.4"/><path d="M5.00 7.50L5.00 8.75" stroke="#222" stroke-width="1.4"/><path d="M3.23 6.77L2.35 7.65" stroke="#222" stroke-width="1.4"/><path d="M2.50 5.00L1.25 5.00" stroke="#222" stroke-width="1.4"/><path d="M3.23 3.23L2.35 2.35" stroke="#222" stroke-width="1.4"/><path d="M5.00 2.50L5.00 1.25" stroke="#222" stroke-width="1.4"/><path d="M6.77 3.23L7.65 2.35" stroke="#222" stroke-width="1.4"/></g></svg>
<svg class="b" style="left:983px;top:443px" width="9" height="4"><rect x="0.70" y="0.90" width="6.60" height="1.20" fill="#555"/></svg>
<svg class="b" style="left:999px;top:440px;" width="11" height="10"><g transform="translate(0.50 0.00)"><rect x="0.8" y="0.8" width="7.4" height="7.4" rx="1" fill="none" stroke="#444" stroke-width="0.9"/><path d="M0.8 2.2h7.4" stroke="#444" stroke-width="1.2"/><path d="M3.4 6.2L5.8 3.8M4 3.7h1.9v1.9" fill="none" stroke="#444" stroke-width="0.8"/></g></svg>
<svg class="b" style="left:379px;top:458px" width="644" height="74"><rect x="0.50" y="0.20" width="642.50" height="72.00" fill="#f1f1f1"/></svg>
<svg class="b" style="left:392px;top:458px" width="2" height="74"><rect x="0.00" y="0.20" width="0.80" height="72.00" fill="#e9e9e9"/></svg>
<div class="b" style="left:927.5px;top:463px;width:86px;height:14.5px;background:#fbfbfb;border:0.8px solid #cfcfcf;border-radius:2px;box-sizing:border-box;"></div>
<span class="t" style="left:931.00px;top:467.04px;font-size:6.4px;line-height:8px;color:#2a2a2a;letter-spacing:-0.058px;">Mode: Simple Coding Query</span>
<svg class="b" style="left:695px;top:502px" width="328" height="22"><rect x="0.00" y="0.50" width="327.00" height="20.00" fill="#dcdcdc"/></svg>
<svg class="b" style="left:700px;top:508px;" width="9" height="11"><g transform="translate(0.50 0.00)"><rect x="2" y="0.5" width="3" height="5.4" rx="1.5" fill="#fff" stroke="#333" stroke-width="0.8"/><path d="M0.8 4.4c0 3.2 5.4 3.2 5.4 0M3.5 6.8v1.6" fill="none" stroke="#333" stroke-width="0.7"/></g></svg>
<svg class="b" style="left:1008px;top:509px;" width="9" height="9"><g transform="translate(0.00 0.00)"><path d="M0.8 0.8L7.2 7.2M7.2 0.8L0.8 7.2" stroke="#333" stroke-width="0.9"/></g></svg>
<svg class="b" style="left:1022px;top:80px" width="4" height="454"><rect x="0.60" y="0.00" width="1.40" height="453.00" fill="#2a2e38"/></svg>
</body></html>
